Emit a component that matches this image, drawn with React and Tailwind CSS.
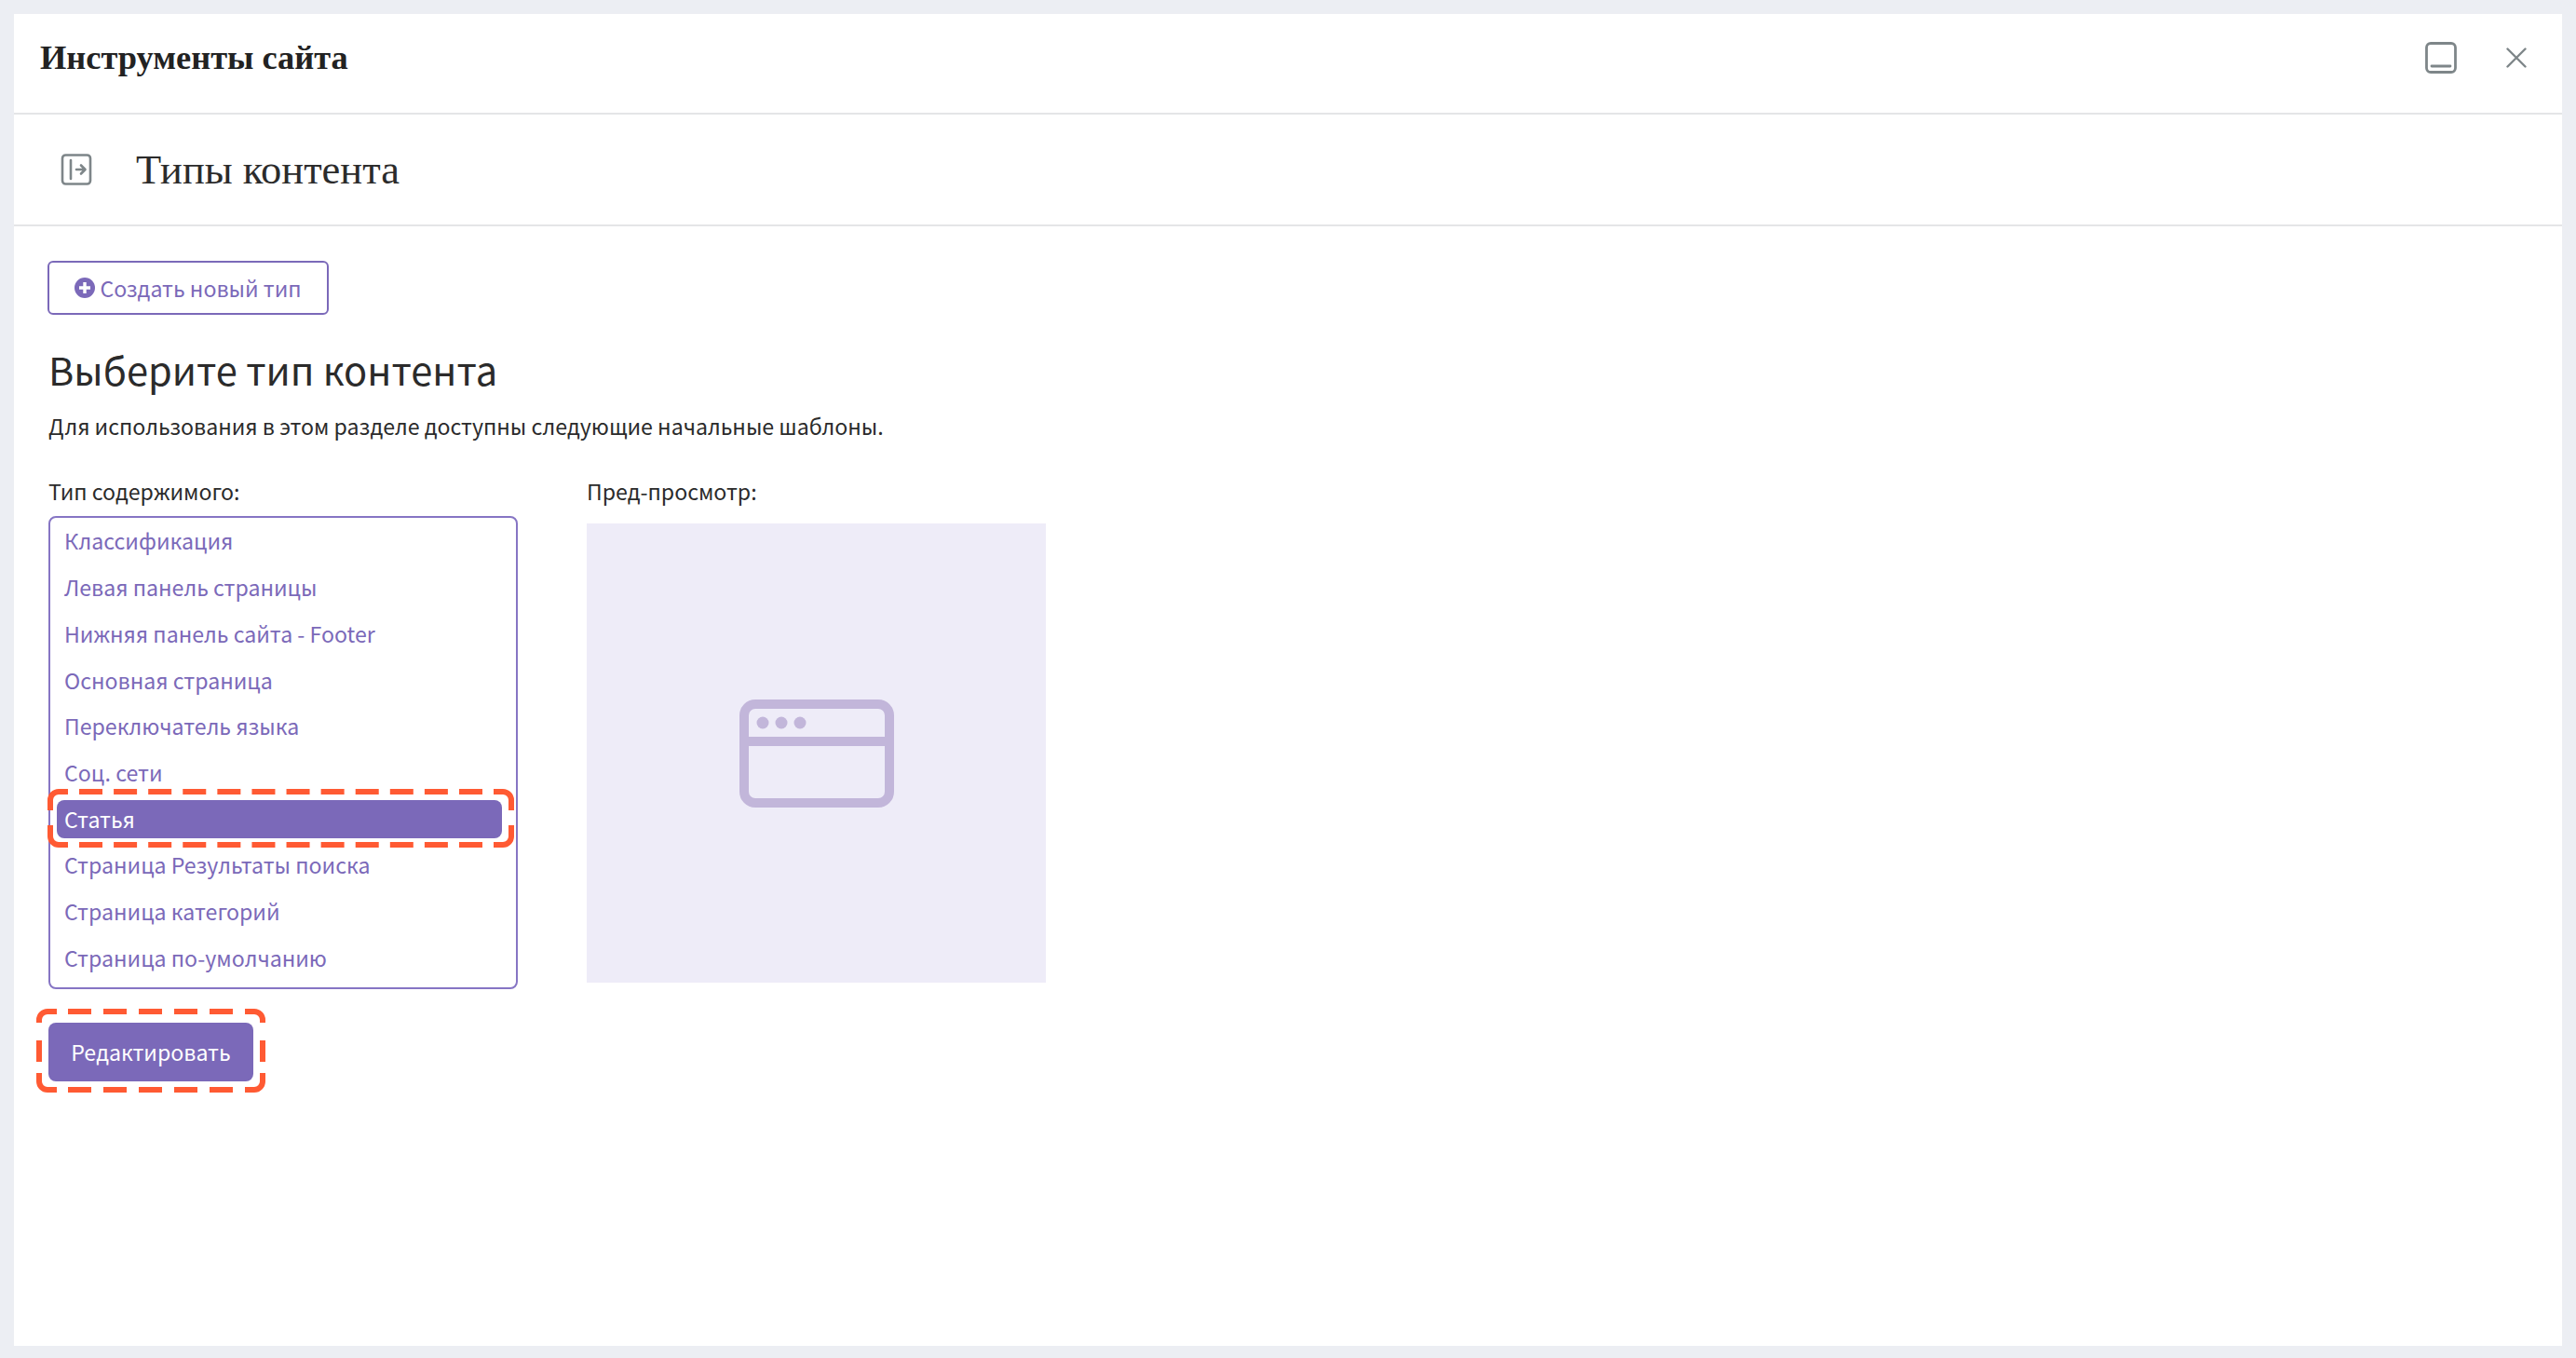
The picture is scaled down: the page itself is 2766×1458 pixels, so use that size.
const contentTypes = [
  "Классификация",
  "Левая панель страницы",
  "Нижняя панель сайта - Footer",
  "Основная страница",
  "Переключатель языка",
  "Соц. сети",
  "Статья",
  "Страница Результаты поиска",
  "Страница категорий",
  "Страница по-умолчанию",
];

// annotation frame: corners and sides are cut by hand, the long edges are dashed
const DashedFrame = ({ w, h, gap, cornerTop, cornerBottom, side, className }) => (
  <svg
    className={`absolute pointer-events-none ${className}`}
    width={w}
    height={h}
    viewBox={`0 0 ${w} ${h}`}
    fill="none"
    stroke="#ff5a33"
    strokeWidth="6"
  >
    <path d={`M3 ${cornerTop}V12A9 9 0 0 1 12 3H22`} />
    <path d={`M${w - 22} 3H${w - 12}A9 9 0 0 1 ${w - 3} 12V${cornerTop}`} />
    <path d={`M${w - 3} ${h - cornerBottom}V${h - 12}A9 9 0 0 1 ${w - 12} ${h - 3}H${w - 22}`} />
    <path d={`M22 ${h - 3}H12A9 9 0 0 1 3 ${h - 12}V${h - cornerBottom}`} />
    <path d={`M34 3H${w - 34}M34 ${h - 3}H${w - 34}`} strokeDasharray={`25 ${gap}`} />
    {side && <path d={`M3 ${side[0]}V${side[1]}M${w - 3} ${side[0]}V${side[1]}`} />}
  </svg>
);

const DockIcon = () => (
  <svg width="34" height="34" viewBox="0 0 34 34" fill="none" stroke="#7e8689" strokeWidth="2.8">
    <rect x="1.5" y="1.5" width="31" height="31" rx="4.5" />
    <path d="M7 26h20" strokeLinecap="round" />
  </svg>
);

const CloseIcon = () => (
  <svg width="22" height="22" viewBox="0 0 22 22" fill="none" stroke="#7e8689" strokeWidth="2.4" strokeLinecap="round">
    <path d="M1.5 1.5l19 19M20.5 1.5l-19 19" />
  </svg>
);

const SidebarIcon = () => (
  <svg width="34" height="34" viewBox="0 0 34 34" fill="none" stroke="#7e8689" strokeWidth="2.6" strokeLinecap="round" strokeLinejoin="round">
    <rect x="2" y="1.5" width="30" height="31" rx="3.5" />
    <path d="M11 7v20" />
    <path d="M17 17h9M22 12.5l4.5 4.5-4.5 4.5" />
  </svg>
);

const PlusCircle = () => (
  <svg width="22" height="22" viewBox="0 0 22 22">
    <circle cx="11" cy="11" r="11" fill="#7b69b9" />
    <path d="M11 5v12M5 11h12" stroke="#fff" strokeWidth="3.4" />
  </svg>
);

const BrowserIcon = () => (
  <svg width="166" height="116" viewBox="0 0 166 116" fill="none">
    <rect x="5" y="5" width="156" height="106" rx="12" stroke="#c2b6da" strokeWidth="10" />
    <path d="M5 45h156" stroke="#c2b6da" strokeWidth="10" />
    <circle cx="25" cy="25" r="6.5" fill="#c2b6da" />
    <circle cx="45" cy="25" r="6.5" fill="#c2b6da" />
    <circle cx="65" cy="25" r="6.5" fill="#c2b6da" />
  </svg>
);

const App = () => {
  return (
    <div className="min-h-[1458px] bg-[#eceef3] pt-[15px] pb-[13px] pl-[15px] pr-[15px] flex font-['Noto_Sans_CJK_SC','Noto_Sans',sans-serif]">
      <div className="flex-1 bg-white flex flex-col">
        <header className="h-[108px] flex items-center justify-between pl-[28px] pr-[38px] pb-[12px] border-b-2 border-[#e4e5e7]">
          <h1 className="font-['Liberation_Serif',serif] font-bold text-[36.4px] text-[#222]">Инструменты сайта</h1>
          <div className="flex items-center gap-[53px]">
            <DockIcon />
            <CloseIcon />
          </div>
        </header>

        <div className="h-[120px] flex items-center pl-[50px] gap-[47px] border-b-2 border-[#e4e5e7]">
          <SidebarIcon />
          <h2 className="font-['Liberation_Serif',serif] text-[44.5px] text-[#2b2b2b]">Типы контента</h2>
        </div>

        <main className="pl-[37px] pt-[37px]">
          <button className="-ml-[1px] h-[58px] w-[302px] flex items-center justify-center gap-[5px] border-2 border-[#7b69b9] rounded-[6px] text-[#7b69b9] text-[23.15px]">
            <PlusCircle />
            Создать новый тип
          </button>

          <h3 className="mt-[28px] text-[41.6px] leading-[60px] text-[#2b2b2b]">Выберите тип контента</h3>
          <p className="mt-[13px] text-[23.15px] leading-[36px] text-[#2b2b2b]">
            Для использования в этом разделе доступны следующие начальные шаблоны.
          </p>

          <div className="mt-[34px] flex gap-[74px]">
            <div className="w-[504px]">
              <div className="text-[23.15px] leading-[36px] text-[#2b2b2b]">Тип содержимого:</div>
              <ul className="mt-[9px] h-[508px] border-2 border-[#8675c4] rounded-[8px] pb-[7px] px-[7px] flex flex-col justify-center">
                {contentTypes.map((name) => {
                  const selected = name === "Статья";
                  return (
                    <li key={name} className="h-[49.8px] flex items-center">
                      {selected ? (
                        <span className="relative w-[478px] h-[41px] flex items-center px-[8px] bg-[#7b69b9] rounded-[8px] text-white text-[23.15px]">
                          {name}
                          <DashedFrame
                            w={501}
                            h={63}
                            gap={12.09}
                            cornerTop={23}
                            cornerBottom={24}
                            className="-left-[10px] -top-[12px]"
                          />
                        </span>
                      ) : (
                        <span className="px-[8px] text-[#7b69b9] text-[23.15px]">{name}</span>
                      )}
                    </li>
                  );
                })}
              </ul>
            </div>

            <div className="w-[493px]">
              <div className="text-[23.15px] leading-[36px] text-[#2b2b2b]">Пред-просмотр:</div>
              <div className="mt-[17px] h-[493px] bg-[#eeecf8] flex items-center justify-center">
                <BrowserIcon />
              </div>
            </div>
          </div>

          <div className="relative mt-[36px] w-[220px]">
            <button className="w-[220px] h-[63px] bg-[#7b69b9] rounded-[8px] text-white text-[23.15px]">
              Редактировать
            </button>
            <DashedFrame
              w={246}
              h={90}
              gap={13}
              cornerTop={15}
              cornerBottom={21}
              side={[34, 57]}
              className="-left-[13px] -top-[15px]"
            />
          </div>
        </main>
      </div>
    </div>
  );
};

export default App;
